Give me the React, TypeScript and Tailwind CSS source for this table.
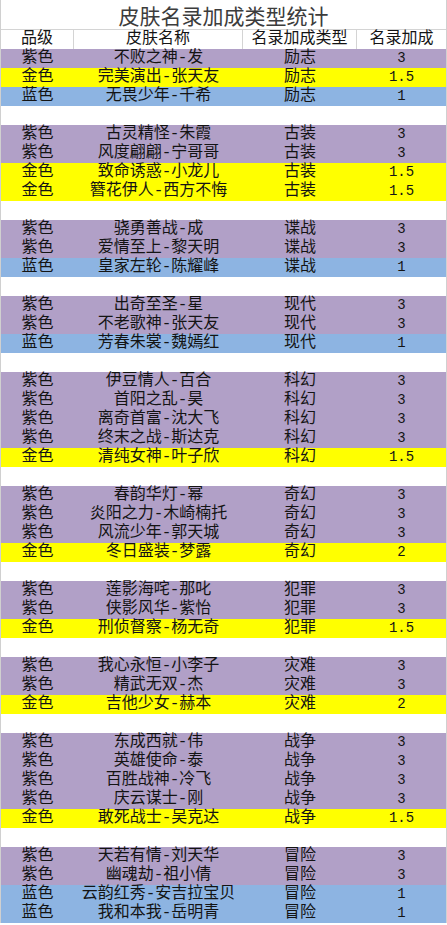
import React from 'react';

type Row = [string, string, string, string];

const groups: Row[][] = [
  [
    ['紫色', '不败之神-发', '励志', '3'],
    ['金色', '完美演出-张天友', '励志', '1.5'],
    ['蓝色', '无畏少年-千希', '励志', '1'],
  ],
  [
    ['紫色', '古灵精怪-朱霞', '古装', '3'],
    ['紫色', '风度翩翩-宁哥哥', '古装', '3'],
    ['金色', '致命诱惑-小龙儿', '古装', '1.5'],
    ['金色', '簪花伊人-西方不悔', '古装', '1.5'],
  ],
  [
    ['紫色', '骁勇善战-成', '谍战', '3'],
    ['紫色', '爱情至上-黎天明', '谍战', '3'],
    ['蓝色', '皇家左轮-陈耀峰', '谍战', '1'],
  ],
  [
    ['紫色', '出奇至圣-星', '现代', '3'],
    ['紫色', '不老歌神-张天友', '现代', '3'],
    ['蓝色', '芳春朱裳-魏嫣红', '现代', '1'],
  ],
  [
    ['紫色', '伊豆情人-百合', '科幻', '3'],
    ['紫色', '首阳之乱-昊', '科幻', '3'],
    ['紫色', '离奇首富-沈大飞', '科幻', '3'],
    ['紫色', '终末之战-斯达克', '科幻', '3'],
    ['金色', '清纯女神-叶子欣', '科幻', '1.5'],
  ],
  [
    ['紫色', '春韵华灯-幂', '奇幻', '3'],
    ['紫色', '炎阳之力-木崎楠托', '奇幻', '3'],
    ['紫色', '风流少年-郭天城', '奇幻', '3'],
    ['金色', '冬日盛装-梦露', '奇幻', '2'],
  ],
  [
    ['紫色', '莲影海咤-那叱', '犯罪', '3'],
    ['紫色', '侠影风华-紫怡', '犯罪', '3'],
    ['金色', '刑侦督察-杨无奇', '犯罪', '1.5'],
  ],
  [
    ['紫色', '我心永恒-小李子', '灾难', '3'],
    ['紫色', '精武无双-杰', '灾难', '3'],
    ['金色', '吉他少女-赫本', '灾难', '2'],
  ],
  [
    ['紫色', '东成西就-伟', '战争', '3'],
    ['紫色', '英雄使命-泰', '战争', '3'],
    ['紫色', '百胜战神-冷飞', '战争', '3'],
    ['紫色', '庆云谋士-刚', '战争', '3'],
    ['金色', '敢死战士-吴克达', '战争', '1.5'],
  ],
  [
    ['紫色', '天若有情-刘天华', '冒险', '3'],
    ['紫色', '幽魂劫-祖小倩', '冒险', '3'],
    ['蓝色', '云韵红秀-安吉拉宝贝', '冒险', '1'],
    ['蓝色', '我和本我-岳明青', '冒险', '1'],
  ],
];

const fill: Record<string, string> = {
  紫色: 'bg-[#b1a0c7]',
  金色: 'bg-[#ffff00]',
  蓝色: 'bg-[#8db4e2]',
};

const cols = 'grid grid-cols-[73px_169px_114px_1fr] h-[19px] leading-[19px] text-center';

function DataRow({ row }: { row: Row }) {
  return (
    <div className={`${cols} ${fill[row[0]]}`}>
      <div>{row[0]}</div>
      <div className="whitespace-nowrap">{row[1]}</div>
      <div>{row[2]}</div>
      <div className="text-[14px]">{row[3]}</div>
    </div>
  );
}

export default function App() {
  return (
    <div className="w-[447px] h-[925px] bg-white text-[16px] text-[#141414] font-['Liberation_Mono','Noto_Sans_CJK_SC',monospace]">
      <div className="border-l border-r border-[#d0d0d0] w-[447px]">
        <div className="h-[30px] leading-[30px] text-center text-[21px] text-[#3c3c3c] font-['Noto_Sans_CJK_SC',sans-serif] border-b border-[#d4d4d4]">
          皮肤名录加成类型统计
        </div>
        <div className={`${cols} h-[19px]`}>
          <div className="border-r border-[#d4d4d4]">品级</div>
          <div className="border-r border-[#d4d4d4]">皮肤名称</div>
          <div className="border-r border-[#d4d4d4]">名录加成类型</div>
          <div>名录加成</div>
        </div>
        {groups.map((g, gi) => (
          <div key={gi}>
            {gi > 0 && <div className="h-[19px] bg-white" />}
            {g.map((r, ri) => (
              <DataRow key={ri} row={r} />
            ))}
          </div>
        ))}
      </div>
    </div>
  );
}
